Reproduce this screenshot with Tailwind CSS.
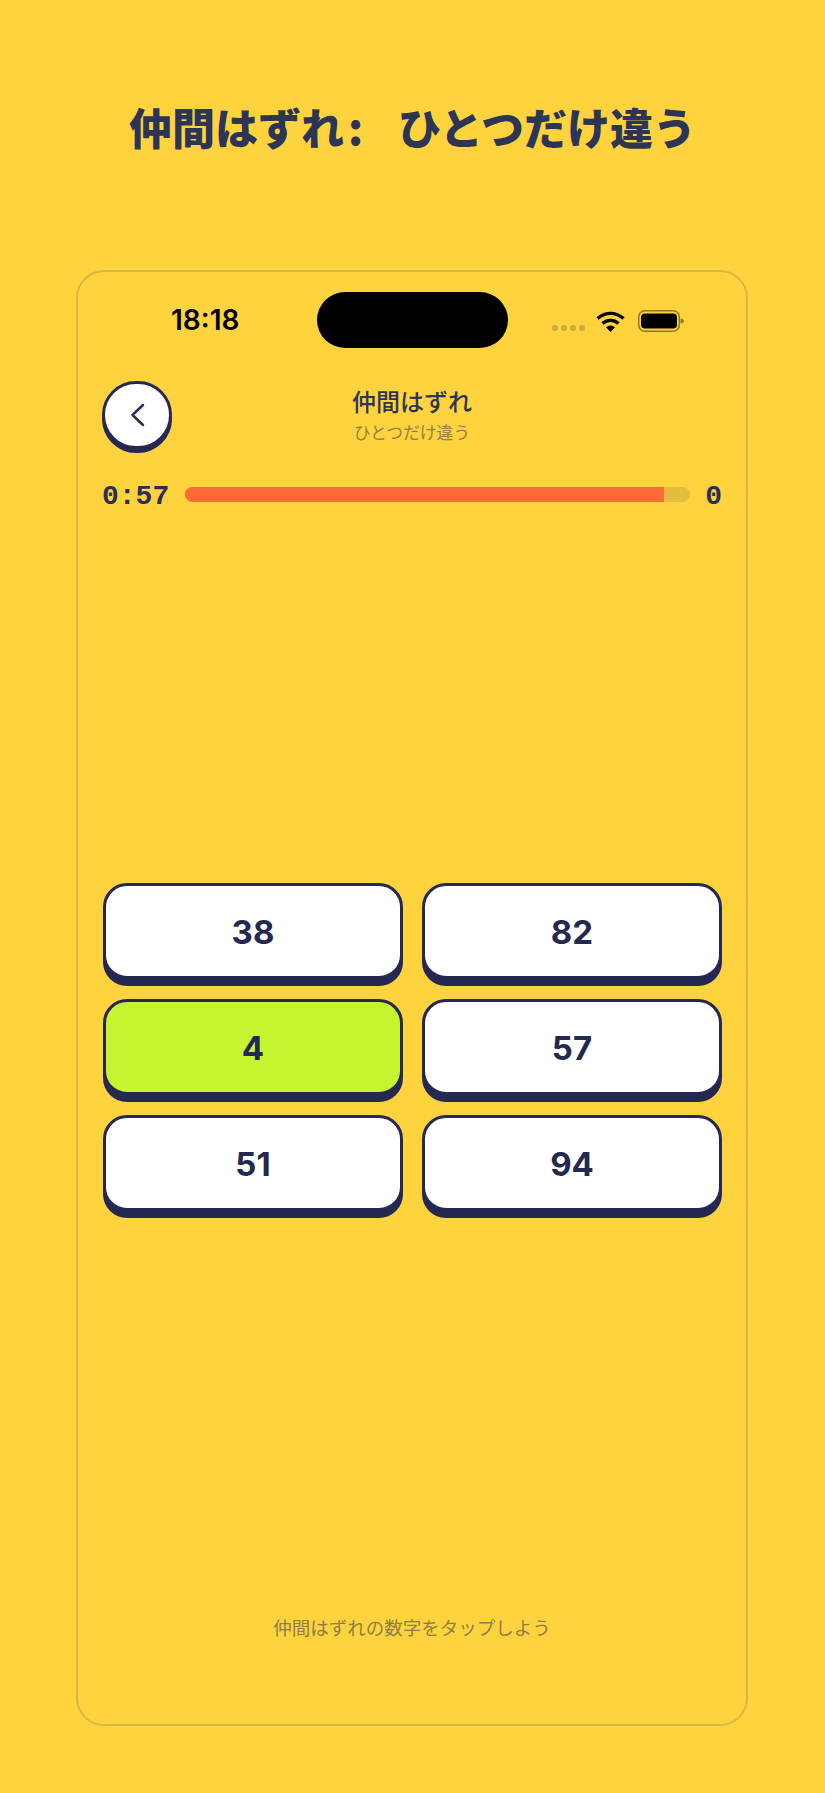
<!DOCTYPE html>
<html lang="ja">
<head>
    <meta charset="UTF-8">
    <meta name="viewport" content="width=device-width, initial-scale=1.0">
    <title>仲間はずれ</title>
    <script src="https://cdn.jsdelivr.net/npm/@tailwindcss/browser@4"></script>
</head>
<body class="bg-[#ffd33d] font-['Inter','Noto_Sans_CJK_JP',sans-serif] w-[825px] h-[1793px] overflow-hidden">
    <h1 class="pt-[97px] h-[270px] text-center text-[43px] leading-[58px] font-black text-[#2d3557] font-['Noto_Sans_CJK_JP',sans-serif]">仲間はずれ<span class="ml-[4px] mr-[35px]">:</span>ひとつだけ違う</h1>

    <main class="ml-[76px] w-[672px] h-[1456px] border-2 border-[#d9b743] rounded-[28px] flex flex-col">
        <!-- status bar -->
        <div class="flex items-center h-[56px] mt-[20px] pl-[93px]">
            <span class="w-[146px] text-[28px] leading-none font-semibold text-black">18:18</span>
            <div class="w-[191px] h-[56px] rounded-[28px] bg-black"></div>
            <div class="flex items-start ml-[44px] mt-[2px]">
                <div class="flex gap-[3px] mt-[15px]">
                    <span class="w-[6px] h-[6px] rounded-full bg-[#c9ab3f]"></span>
                    <span class="w-[6px] h-[6px] rounded-full bg-[#c9ab3f]"></span>
                    <span class="w-[6px] h-[6px] rounded-full bg-[#c9ab3f]"></span>
                    <span class="w-[6px] h-[6px] rounded-full bg-[#c9ab3f]"></span>
                </div>
                <svg class="ml-[11px]" width="29" height="22" viewBox="0 0 29 22" fill="none">
                    <path d="M1.5 8.5A19 19 0 0 1 27.5 8.5" stroke="#000" stroke-width="3.2"/>
                    <path d="M6.5 13.5A12 12 0 0 1 22.5 13.5" stroke="#000" stroke-width="3.2"/>
                    <path d="M10 17.2Q14.5 14 19 17.2L14.5 22Z" fill="#000"/>
                </svg>
                <svg class="ml-[13px]" width="47" height="22" viewBox="0 0 47 22" fill="none">
                    <rect x="0.75" y="0.75" width="40.5" height="20.5" rx="6" stroke="#8f7a1e" stroke-width="1.5"/>
                    <rect x="3" y="3.5" width="36" height="15" rx="4" fill="#000"/>
                    <path d="M42.5 8.5C45 9 46 10 46 11C46 12 45 13 42.5 13.5Z" fill="#8f7a1e"/>
                </svg>
            </div>
        </div>

        <!-- header -->
        <div class="grid grid-cols-[70px_1fr_70px] h-[72px] mt-[33px] mx-[24px]">
            <button class="w-[70px] h-[68px] rounded-full bg-white border-[3px] border-[#252850] shadow-[0_4px_0_#252850] flex items-center justify-center">
                <svg width="15" height="24" viewBox="0 0 15 24" fill="none">
                    <path d="M13 2L2.5 12L13 22" stroke="#2b2e55" stroke-width="2.5" stroke-linecap="round" stroke-linejoin="round"/>
                </svg>
            </button>
            <div class="text-center pt-[6px]">
                <div class="text-[24px] leading-[32px] font-medium text-[#2d3557]">仲間はずれ</div>
                <div class="text-[16.8px] leading-[24px] mt-[2px] text-[#8f8440]">ひとつだけ違う</div>
            </div>
        </div>

        <!-- timer row -->
        <div class="flex items-center h-[32px] mt-[25px] mb-[1px] mx-[24px] font-['Liberation_Mono',monospace] font-bold text-[28px] text-[#2b2e55]">
            <span class="w-[66px] pt-[5px] leading-none">0:57</span>
            <div class="flex-1 ml-[17px] h-[15px] rounded-full bg-[#e3bd40] overflow-hidden">
                <div class="h-full bg-[#ff6b35]" style="width: 94.8%"></div>
            </div>
            <span class="w-[32px] pt-[5px] text-right leading-none">0</span>
        </div>

        <!-- answers -->
        <div class="grid grid-cols-2 gap-x-[19px] gap-y-[20px] mt-[372px] pl-[25px] pr-[24px] text-[33px] font-bold text-[#252850]">
            <button class="h-[96px] pt-[3px] rounded-[24px] bg-white border-[3px] border-[#252850] shadow-[0_7px_0_#252850]">38</button>
            <button class="h-[96px] pt-[3px] rounded-[24px] bg-white border-[3px] border-[#252850] shadow-[0_7px_0_#252850]">82</button>
            <button class="h-[96px] pt-[3px] rounded-[24px] bg-[#c6f52f] border-[3px] border-[#252850] shadow-[0_7px_0_#252850]">4</button>
            <button class="h-[96px] pt-[3px] rounded-[24px] bg-white border-[3px] border-[#252850] shadow-[0_7px_0_#252850]">57</button>
            <button class="h-[96px] pt-[3px] rounded-[24px] bg-white border-[3px] border-[#252850] shadow-[0_7px_0_#252850]">51</button>
            <button class="h-[96px] pt-[3px] rounded-[24px] bg-white border-[3px] border-[#252850] shadow-[0_7px_0_#252850]">94</button>
        </div>

        <p class="mt-auto mb-[82px] text-center text-[18.5px] leading-[28px] text-[#8a7f45]">仲間はずれの数字をタップしよう</p>
    </main>
</body>
</html>
